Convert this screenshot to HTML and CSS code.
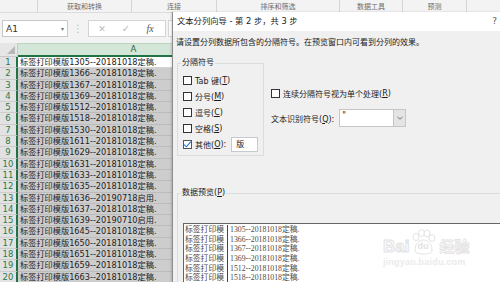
FILE: index.html
```html
<!DOCTYPE html>
<html>
<head>
<meta charset="utf-8">
<title>文本分列向导 - 第 2 步，共 3 步</title>
<link rel="stylesheet" href="styles.css">
</head>
<body>
<div class="excel">
	<div class="ribbon">
		<div class="grp g0"></div>
		<div class="grp g1">获取和转换</div>
		<div class="grp g2">连接</div>
		<div class="grp g3">排序和筛选</div>
		<div class="grp g4">数据工具</div>
		<div class="grp g5">预测</div>
		<div class="grp g6"></div>
	</div>
	<div class="fbar">
		<div class="namebox"><span>A1</span><span class="caret">▾</span></div>
		<div class="grip">⋮</div>
		<div class="fbtns">
			<span class="fb-x">✕</span>
			<span class="fb-ok">✓</span>
			<span class="fb-fx">fx</span>
		</div>
		<div class="finput"></div>
	</div>
	<div class="sheet">
		<div class="corner"></div><div class="colhead">A</div><div class="colhead colb"></div>
		<div class="rh">1</div><div class="cell active">标签打印模版1305--20181018定稿.</div><div class="cell"></div>
		<div class="rh">2</div><div class="cell">标签打印模版1366--20181018定稿.</div><div class="cell"></div>
		<div class="rh">3</div><div class="cell">标签打印模版1367--20181018定稿.</div><div class="cell"></div>
		<div class="rh">4</div><div class="cell">标签打印模版1369--20181018定稿.</div><div class="cell"></div>
		<div class="rh">5</div><div class="cell">标签打印模版1512--20181018定稿.</div><div class="cell"></div>
		<div class="rh">6</div><div class="cell">标签打印模版1518--20181018定稿.</div><div class="cell"></div>
		<div class="rh">7</div><div class="cell">标签打印模版1530--20181018定稿.</div><div class="cell"></div>
		<div class="rh">8</div><div class="cell">标签打印模版1611--20181018定稿.</div><div class="cell"></div>
		<div class="rh">9</div><div class="cell">标签打印模版1629--20181018定稿.</div><div class="cell"></div>
		<div class="rh">10</div><div class="cell">标签打印模版1631--20181018定稿.</div><div class="cell"></div>
		<div class="rh">11</div><div class="cell">标签打印模版1633--20181018定稿.</div><div class="cell"></div>
		<div class="rh">12</div><div class="cell">标签打印模版1635--20181018定稿.</div><div class="cell"></div>
		<div class="rh">13</div><div class="cell">标签打印模版1636--20190718启用.</div><div class="cell"></div>
		<div class="rh">14</div><div class="cell">标签打印模版1637--20181018定稿.</div><div class="cell"></div>
		<div class="rh">15</div><div class="cell">标签打印模版1639--20190710启用.</div><div class="cell"></div>
		<div class="rh">16</div><div class="cell">标签打印模版1645--20181018定稿.</div><div class="cell"></div>
		<div class="rh">17</div><div class="cell">标签打印模版1650--20181018定稿.</div><div class="cell"></div>
		<div class="rh">18</div><div class="cell">标签打印模版1651--20181018定稿.</div><div class="cell"></div>
		<div class="rh">19</div><div class="cell">标签打印模版1659--20181018定稿.</div><div class="cell"></div>
		<div class="rh">20</div><div class="cell">标签打印模版1663--20181018定稿.</div><div class="cell"></div>
	</div>
</div>

<div class="dialog">
	<div class="dlg-title">
		<span>文本分列向导 - 第 2 步，共 3 步</span>
		<span class="help">?</span>
	</div>
	<div class="dlg-body">
		<p class="hint">请设置分列数据所包含的分隔符号。在预览窗口内可看到分列的效果。</p>
		<div class="opts">
			<div class="group sep">
				<span class="group-title">分隔符号</span>
				<div class="chk"><span class="box"></span>Tab 键(<u>T</u>)</div>
				<div class="chk"><span class="box"></span>分号(<u>M</u>)</div>
				<div class="chk"><span class="box"></span>逗号(<u>C</u>)</div>
				<div class="chk"><span class="box"></span>空格(<u>S</u>)</div>
				<div class="chk">
					<span class="box on"><svg width="9" height="9" viewBox="0 0 9 9"><path d="M1.2 4.6 L3.4 6.8 L7.9 1.6" fill="none" stroke="#2b6fd4" stroke-width="1.1"/></svg></span>其他(<u>O</u>):
					<span class="other">版</span>
				</div>
			</div>
			<div class="side">
				<div class="chk"><span class="box"></span>连续分隔符号视为单个处理(<u>R</u>)</div>
				<div class="qual">
					<span>文本识别符号(<u>Q</u>):</span>
					<div class="combo">
						<span class="val">"</span>
						<span class="arrow"><svg width="6" height="4" viewBox="0 0 6 4"><path d="M0.5 0.8 L3 3.2 L5.5 0.8" fill="none" stroke="#666" stroke-width="0.9"/></svg></span>
					</div>
				</div>
			</div>
		</div>
		<div class="group pgroup">
			<span class="group-title">数据预览(<u>P</u>)</span>
			<div class="preview">
				<div class="prow"><span class="pc1">标签打印模</span><span class="pc2">1305--20181018定稿.</span></div>
				<div class="prow"><span class="pc1">标签打印模</span><span class="pc2">1366--20181018定稿.</span></div>
				<div class="prow"><span class="pc1">标签打印模</span><span class="pc2">1367--20181018定稿.</span></div>
				<div class="prow"><span class="pc1">标签打印模</span><span class="pc2">1369--20181018定稿.</span></div>
				<div class="prow"><span class="pc1">标签打印模</span><span class="pc2">1512--20181018定稿.</span></div>
				<div class="prow"><span class="pc1">标签打印模</span><span class="pc2">1518--20181018定稿.</span></div>
			</div>
		</div>
	</div>
</div>

<div class="watermark">
	<div class="wm-top">
		<span class="wm-bai">Bai</span>
		<span class="wm-paw">
			<svg width="28" height="26" viewBox="0 0 28 26">
				<g fill="#fff" stroke="#e3e3e3" stroke-width="1">
					<ellipse cx="7" cy="8" rx="3" ry="3.6"/>
					<ellipse cx="12.5" cy="4" rx="3" ry="3.4"/>
					<ellipse cx="18" cy="4.5" rx="3" ry="3.4"/>
					<ellipse cx="23" cy="9" rx="3" ry="3.4"/>
					<path d="M6 21 C6 15 10 11 14.5 11 C19 11 23 15 23 21 C23 24 20 25 14.5 25 C9 25 6 24 6 21 Z"/>
				</g>
			</svg>
			<span class="wm-du">du</span>
		</span>
		<span class="wm-jy">经验</span>
	</div>
	<div class="wm-url">jingyan.baidu.com</div>
</div>
</body>
</html>
```

FILE: styles.css
```css
* { box-sizing: border-box; }
body { margin: 0; width: 500px; height: 282px; overflow: hidden; position: relative; background: #fff; font-family: "DejaVu Sans", "Noto Sans CJK SC", sans-serif; font-size: 8px; color: #222; }

/* excel window */
.ribbon { display: flex; height: 13px; background: #f3f3f3; border-bottom: 1px solid #dcdcdc; }
.grp { height: 12px; border-right: 1px solid #d6d6d6; color: #6e6e6e; font-size: 7px; line-height: 12px; text-align: center; font-family: "Noto Sans CJK SC", sans-serif; }
.g0 { width: 38px; }
.g1 { width: 94px; }
.g2 { width: 85px; }
.g3 { width: 123px; }
.g4 { width: 63px; }
.g5 { width: 64px; }
.g6 { flex: 1; border-right: none; }

.fbar { display: flex; align-items: flex-start; height: 30px; padding-top: 7px; background: #f3f3f3; }
.namebox { display: flex; align-items: center; justify-content: space-between; width: 66px; height: 17px; margin-left: 2px; padding: 0 3px 0 3px; background: #fff; border: 1px solid #c8c8c8; font-size: 9px; color: #333; }
.caret { font-size: 6px; color: #777; }
.grip { width: 20px; text-align: center; color: #b5b5b5; font-size: 10px; line-height: 17px; }
.fbtns { display: flex; align-items: center; width: 78px; height: 17px; background: #fff; border: 1px solid #d4d4d4; }
.fbtns span { width: 24px; text-align: center; }
.fb-x { margin-left: 1px; color: #b9b9b9; font-size: 9px; }
.fb-ok { color: #b9b9b9; font-size: 10px; }
.fb-fx { color: #555; font-family: "Liberation Serif", serif; font-style: italic; font-size: 10px; }
.finput { flex: 1; height: 17px; margin-left: 2px; background: #fff; border: 1px solid #d4d4d4; }

.sheet { display: grid; grid-template-columns: 18px 231px 120px; grid-template-rows: 14px; grid-auto-rows: 11.3px; }
.corner { background: #e6e6e6; border-right: 1px solid #c9c9c9; border-bottom: 1px solid #c9c9c9; position: relative; }
.corner::after { content: ""; position: absolute; right: 2px; bottom: 2px; border-left: 8px solid transparent; border-bottom: 8px solid #b7b7b7; }
.colhead { background: #d3e6d8; border-top: 1px solid #b9d4bf; border-bottom: 2px solid #217346; color: #1d6a3d; text-align: center; font-size: 8.5px; line-height: 11px; }
.colb { background: #e6e6e6; border-bottom: 1px solid #c9c9c9; }
.rh { background: #e2e2e2; border-right: 2px solid #217346; border-bottom: 1px solid #cdcdcd; color: #2a7a49; text-align: center; font-size: 8.5px; line-height: 11px; }
.cell { background: #cdcdcd; border-bottom: 1px solid #bcbcbc; padding-left: 2px; font-size: 8.2px; line-height: 11px; white-space: nowrap; overflow: hidden; color: #222; }
.cell.active { background: #fff; border-bottom-color: #d4d4d4; }

/* dialog */
.dialog { position: absolute; left: 172px; top: 12px; width: 340px; height: 270px; background: #f0f0f0; border-left: 1px solid #8c8c8c; box-shadow: -1px 0 2px rgba(0,0,0,0.15); font-family: "DejaVu Sans", "Noto Sans CJK SC", sans-serif; font-size: 8px; color: #1a1a1a; }
.dlg-title { display: flex; justify-content: space-between; height: 19px; padding: 0 15px 0 4px; background: #fff; line-height: 19px; font-size: 8.3px; }
.help { font-size: 9px; color: #555; }
.hint { margin: 6px 0 0 3px; line-height: 12px; font-size: 8px; }
.opts { display: flex; align-items: flex-start; margin-top: 14px; }

.group { position: relative; border: 1px solid #dcdcdc; }
.group-title { position: absolute; top: -7px; left: 3px; padding: 0 1px; background: #f0f0f0; line-height: 12px; font-size: 8px; }
.sep { width: 87px; height: 93px; margin-left: 4px; padding: 8px 0 0 5px; }

.chk { display: flex; align-items: center; height: 16px; white-space: nowrap; }
.box { display: inline-block; width: 9px; height: 9px; margin-right: 3px; background: #fff; border: 1px solid #333; }
.box.on { border-color: #555; }
.box svg { display: block; margin: -1px 0 0 -1px; }
.other { display: inline-block; width: 27px; height: 15px; margin-left: 5px; padding-left: 4px; background: #fff; border: 1px solid #c9c9c9; line-height: 13px; }

.side { margin-left: 7px; padding-top: 22px; }
.qual { display: flex; align-items: center; margin-top: 8px; height: 18px; }
.combo { display: flex; width: 67px; height: 18px; margin-left: 5px; background: #fff; border: 1px solid #c6c6c6; }
.val { flex: 1; padding-left: 2px; line-height: 12px; font-size: 8px; }
.arrow { display: flex; align-items: center; justify-content: center; width: 12px; background: #e4e4e4; border-left: 1px solid #c6c6c6; }

.pgroup { margin: 37px 0 0 4px; height: 90px; border-right: none; border-bottom: none; padding: 29px 0 0 5px; }
.preview { background: #fff; border: 1px solid #666; border-bottom: none; height: 60px; padding-top: 1px; overflow: hidden; }
.prow { display: flex; height: 9.7px; line-height: 9.7px; white-space: nowrap; font-family: "Liberation Serif", "Noto Sans CJK SC", serif; font-size: 7.8px; color: #4a4a4a; }
.pc1 { width: 44px; padding-left: 1px; border-right: 1px solid #444; overflow: hidden; }
.pc2 { padding-left: 2px; }

/* watermark over the preview */
.watermark { position: absolute; left: 383px; top: 228px; width: 92px; font-family: "Liberation Sans", "Noto Sans CJK SC", sans-serif; }
.wm-top { display: flex; align-items: flex-end; height: 27px; }
.wm-bai { font-size: 17px; font-weight: bold; line-height: 17px; color: #fff; -webkit-text-stroke: 1px #e2e2e2; }
.wm-paw { position: relative; width: 28px; height: 26px; }
.wm-paw svg { display: block; }
.wm-du { position: absolute; left: 8px; top: 12px; font-size: 9px; font-weight: bold; color: #e2e2e2; }
.wm-jy { margin-left: 2px; font-size: 15px; line-height: 17px; color: #fff; -webkit-text-stroke: 0.8px #e2e2e2; font-weight: bold; }
.wm-url { margin-top: 2px; font-size: 9px; letter-spacing: 0.2px; color: #ebebeb; font-weight: bold; }
```
